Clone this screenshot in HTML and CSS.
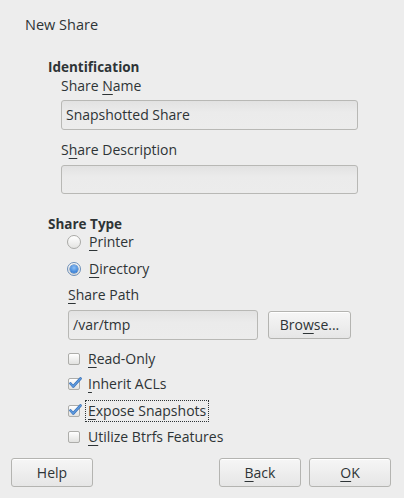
FILE: index.html
```html
<!DOCTYPE html>
<html>
<head>
<meta charset="utf-8">
<link rel="stylesheet" href="styles.css">
</head>
<body>
<div class="dialog">
  <div class="title">New Share</div>
  <div class="content">
    <div class="heading h-ident">Identification</div>
    <div class="group">
      <div class="label l-name">Share <u>N</u>ame</div>
      <div class="entry e-name">Snapshotted Share</div>
      <div class="label l-desc">S<u>h</u>are Description</div>
      <div class="entry e-desc"></div>
    </div>
    <div class="heading h-type">Share Type</div>
    <div class="group">
      <div class="option o-printer"><span class="radio"></span><span><u>P</u>rinter</span></div>
      <div class="option o-dir"><span class="radio checked"></span><span><u>D</u>irectory</span></div>
      <div class="sub">
        <div class="label l-path"><u>S</u>hare Path</div>
        <div class="pathrow">
          <div class="entry e-path">/var/tmp</div>
          <div class="button b-browse">Bro<u>w</u>se...</div>
        </div>
        <div class="check c-ro"><span class="box"></span><span><u>R</u>ead-Only</span></div>
        <div class="check c-acl"><span class="box checked"><svg viewBox="0 0 14 14" width="14" height="14"><path d="M2.5 7.5 L5.2 10.5 L12.5 2.5" fill="none" stroke="#3a72b8" stroke-width="2.6" stroke-linecap="round" stroke-linejoin="round"/><path d="M2.5 7.5 L5.2 10.5 L12.5 2.5" fill="none" stroke="#5e9be0" stroke-width="1.2" stroke-linecap="round" stroke-linejoin="round"/></svg></span><span><u>I</u>nherit ACLs</span></div>
        <div class="check c-snap"><span class="box checked"><svg viewBox="0 0 14 14" width="14" height="14"><path d="M2.5 7.5 L5.2 10.5 L12.5 2.5" fill="none" stroke="#3a72b8" stroke-width="2.6" stroke-linecap="round" stroke-linejoin="round"/><path d="M2.5 7.5 L5.2 10.5 L12.5 2.5" fill="none" stroke="#5e9be0" stroke-width="1.2" stroke-linecap="round" stroke-linejoin="round"/></svg></span><span class="focus"><u>E</u>xpose Snapshots</span></div>
        <div class="check c-btrfs"><span class="box"></span><span><u>U</u>tilize Btrfs Features</span></div>
      </div>
    </div>
  </div>
  <div class="buttons">
    <div class="button b-help">Help</div>
    <div class="spacer"></div>
    <div class="button b-back"><u>B</u>ack</div>
    <div class="button b-ok"><u>O</u>K</div>
  </div>
</div>
</body>
</html>
```

FILE: styles.css
```css
html, body {
  margin: 0;
  padding: 0;
  background: #ededed;
}
body {
  width: 404px;
  height: 498px;
  overflow: hidden;
  font-family: "Open Sans", "DejaVu Sans", sans-serif;
  font-size: 14px;
  color: #2e3436;
}
u {
  text-decoration: underline;
  text-underline-offset: 3px;
  text-decoration-thickness: 1px;
}
.dialog {
  display: flex;
  flex-direction: column;
  height: 498px;
}
.title {
  margin: 16px 0 0 25px;
  line-height: 18px;
  font-size: 14.5px;
}
.content {
  padding-left: 48px;
  display: flex;
  flex-direction: column;
}
.heading {
  font-weight: bold;
  line-height: 18px;
  font-size: 13.5px;
}
.h-ident { margin-top: 24px; }
.h-type { margin-top: 21px; }
.group {
  padding-left: 13px;
  display: flex;
  flex-direction: column;
}
.label {
  line-height: 18px;
}
.l-name { margin-top: 1px; }
.l-desc { margin-top: 11px; }
.entry {
  box-sizing: border-box;
  height: 30px;
  width: 297px;
  border: 1px solid #b8b8b5;
  border-radius: 3px;
  background: linear-gradient(#e2e2e2, #ebebeb 40%, #ececec);
  padding: 0 0 0 4px;
  line-height: 28px;
}
.e-name { margin-top: 5px; }
.e-desc { margin-top: 6px; height: 29px; }
.option {
  display: flex;
  align-items: center;
  line-height: 18px;
  height: 18px;
}
.o-printer { margin-top: 0; }
.o-dir { margin-top: 9px; }
.radio {
  box-sizing: border-box;
  width: 14px;
  height: 14px;
  border-radius: 50%;
  border: 1px solid #a9a9a6;
  background: linear-gradient(#ffffff, #e4e4e2);
  margin: 0 8px 0 6px;
  position: relative;
}
.radio.checked {
  border-color: #6c8fb8;
  background: linear-gradient(#f8f8f8, #dcdcdc);
}
.radio.checked::after {
  content: "";
  position: absolute;
  left: 2px;
  top: 2px;
  width: 8px;
  height: 8px;
  border-radius: 50%;
  background: radial-gradient(circle at 50% 35%, #8ec0f5, #3d84d8 70%);
  box-shadow: 0 0 0 0.5px #2a66b0;
}
.sub {
  padding-left: 7px;
  display: flex;
  flex-direction: column;
}
.l-path { margin-top: 8px; }
.pathrow {
  display: flex;
  align-items: center;
  margin-top: 6px;
}
.e-path {
  width: 190px;
  height: 30px;
}
.button {
  box-sizing: border-box;
  border: 1px solid #b4b4b1;
  border-radius: 3px;
  background: linear-gradient(#f6f6f6, #e6e6e6);
  box-shadow: inset 0 1px 0 #ffffff;
  text-align: center;
}
.b-browse {
  margin-left: 10px;
  width: 83px;
  height: 28px;
  line-height: 26px;
}
.check {
  display: flex;
  align-items: center;
  height: 18px;
  line-height: 18px;
}
.c-ro { margin-top: 10px; }
.c-acl { margin-top: 7px; }
.c-snap { margin-top: 9px; }
.c-btrfs { margin-top: 8px; }
.box {
  box-sizing: border-box;
  width: 12px;
  height: 12px;
  border: 1px solid #adadaa;
  border-radius: 2px;
  background: linear-gradient(#ffffff, #e2e2e0);
  margin-right: 8px;
  position: relative;
}
.box svg {
  position: absolute;
  left: -1px;
  top: -3px;
}
.focus {
  outline: 1px dotted #2e3436;
  outline-offset: 1px;
  padding: 0 1px;
  margin-left: -1px;
}
.buttons {
  display: flex;
  margin-top: auto;
  margin-bottom: 11px;
  padding: 0 13px 0 11px;
  gap: 8px;
}
.spacer { flex: 1; }
.buttons .button {
  width: 82px;
  height: 29px;
  line-height: 27px;
}
```
